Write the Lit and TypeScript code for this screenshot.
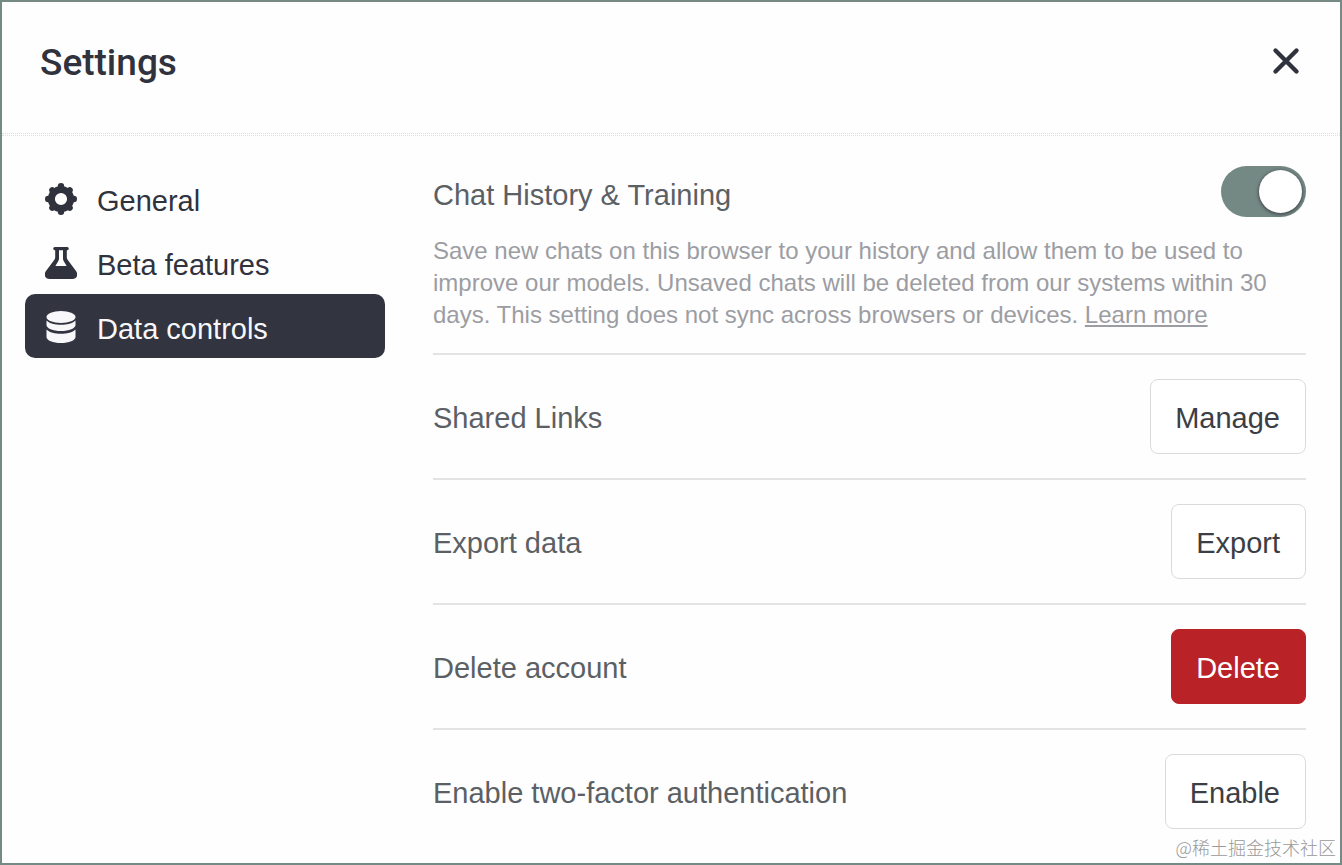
import { LitElement, html, css, svg } from "lit";
import { customElement, state } from "lit/decorators.js";

const icons = {
  general: svg`<g fill="none" stroke="currentColor" stroke-linecap="round"><circle cx="16" cy="16" r="9.600" stroke-width="7"/><path stroke-width="6.400" d="M16 3.200V6M16 28.800V26M3.200 16H6M28.800 16H26"/><path stroke-width="6" d="M7.200 7.200L9 9M24.800 7.200L23 9M7.200 24.800L9 23M24.800 24.800L23 23"/></g>`,
  beta: svg`<path fill-rule="evenodd" d="M9.800 0h12.400a1.600 1.600 0 0 1 0 3.200H21.800v7.400c0 1 .4 1.600 1 2.400l8.200 11c2.600 3.800.8 8-3.800 8H4.800C.2 32-1.600 27.800 1 24L9.200 13c.6-.8 1-1.400 1-2.400V3.200H9.800A1.600 1.600 0 0 1 9.800 0ZM14 3.200v8.400c0 1-.3 1.800-.8 2.600L10.400 19h11.200l-2.800-4.800c-.5-.8-.8-1.600-.8-2.600V3.200Z"/>`,
  data: svg`<ellipse cx="16" cy="6" rx="14.500" ry="6"/><path d="M1.500 9.500c3 3 8.500 4.200 14.500 4.200s11.500-1.200 14.500-4.200V14c0 3.400-6.500 6-14.500 6S1.500 17.400 1.500 14ZM1.500 18.500c3 3 8.500 4.200 14.500 4.200s11.500-1.200 14.500-4.200V26c0 3.400-6.500 6-14.500 6S1.500 29.400 1.500 26Z"/>`,
};

type Section = keyof typeof icons;

const sections: { id: Section; label: string }[] = [
  { id: "general", label: "General" },
  { id: "beta", label: "Beta features" },
  { id: "data", label: "Data controls" },
];

const actions = [
  { label: "Shared Links", button: "Manage", danger: false },
  { label: "Export data", button: "Export", danger: false },
  { label: "Delete account", button: "Delete", danger: true },
  { label: "Enable two-factor authentication", button: "Enable", danger: false },
];

@customElement("app-root")
export class AppRoot extends LitElement {
  @state() private section: Section = "data";

  static styles = css`
    :host {
      display: block;
      position: relative;
      box-sizing: border-box;
      min-height: 100vh;
      border: 2px solid #758985;
      background: #fefefe;
      color: #30323d;
      font-family: "Liberation Sans", Arial, sans-serif;
      font-size: 29px;
      line-height: 39px;
    }
    button {
      font: inherit;
      color: inherit;
      cursor: pointer;
    }
    .header {
      display: flex;
      align-items: center;
      justify-content: space-between;
      margin-bottom: 1px;
      padding: 33px 34px 46px 38px;
      border-bottom: 1px dotted #dfe0e2;
    }
    .title {
      margin: 0;
      padding-top: 4px;
      font-family: Roboto, sans-serif;
      font-size: 37px;
      font-weight: 500;
      line-height: 48px;
    }
    .close {
      display: flex;
      padding: 4px;
      border: 0;
      background: none;
    }
    .body {
      display: grid;
      grid-template-columns: 360px minmax(0, 1fr);
      gap: 48px;
      padding: 30px 34px 8px 23px;
      border-top: 1px dotted #dfe0e2;
    }
    .nav {
      display: flex;
      flex-direction: column;
    }
    .tab {
      display: flex;
      align-items: center;
      gap: 20px;
      height: 64px;
      padding: 6px 20px 0;
      border: 0;
      border-radius: 10px;
      background: none;
      text-align: left;
    }
    .tab svg {
      width: 32px;
      height: 32px;
      margin-bottom: 4px;
      fill: currentColor;
    }
    .tab.active {
      background: #32343f;
      color: #f8f8fb;
    }
    .history {
      padding-bottom: 22px;
    }
    .row {
      display: flex;
      align-items: center;
      justify-content: space-between;
      color: #5b6065;
    }
    .label {
      padding-top: 3px;
    }
    .history .row {
      height: 56px;
    }
    .switch {
      appearance: none;
      display: flex;
      align-items: center;
      width: 85px;
      height: 51px;
      margin: 0 0 6px;
      padding: 4px;
      box-sizing: border-box;
      border-radius: 26px;
      background: #b5babd;
      cursor: pointer;
    }
    .switch::before {
      content: "";
      width: 43px;
      height: 43px;
      border-radius: 50%;
      background: #fff;
      box-shadow: 0 1px 3px 1px #4b5557;
    }
    .switch:checked {
      justify-content: flex-end;
      background: #748884;
    }
    .note {
      margin: 13px 0 0;
      color: #9c9da2;
      font-size: 24px;
      line-height: 32px;
    }
    .note a {
      color: inherit;
      text-decoration-thickness: 2px;
      text-underline-offset: 2px;
    }
    .action {
      padding: 24px 0;
      border-top: 2px solid #e2e3e4;
    }
    .btn {
      padding: 19px 25px 15px 24px;
      border: 1px solid #d9dadb;
      border-radius: 8px;
      background: #fff;
      color: #3c3e46;
    }
    .btn.danger {
      border-color: #b92328;
      background: #b92328;
      color: #fff;
    }
    .mark {
      position: absolute;
      right: 4px;
      bottom: 4px;
      color: #999;
      font-family: "Noto Sans CJK SC", sans-serif;
      font-size: 18px;
      font-weight: 300;
      line-height: 24px;
    }
  `;

  render() {
    return html`
      <header class="header">
        <h1 class="title">Settings</h1>
        <button class="close" aria-label="Close">
          <svg width="32" height="32" viewBox="0 0 32 32" fill="none" stroke="currentColor" stroke-width="4.400" stroke-linecap="round">
            <path d="M5.500 5.500 26.500 26.500M26.500 5.500 5.500 26.500" />
          </svg>
        </button>
      </header>
      <div class="body">
        <nav class="nav">
          ${sections.map(
            (s) => html`<button
              class="tab ${s.id === this.section ? "active" : ""}"
              @click=${() => (this.section = s.id)}
            >
              <svg viewBox="0 0 32 32" aria-hidden="true">${icons[s.id]}</svg>
              <span>${s.label}</span>
            </button>`
          )}
        </nav>
        <main>
          <section class="history">
            <div class="row">
              <label class="label" for="history">Chat History &amp; Training</label>
              <input id="history" class="switch" type="checkbox" role="switch" checked />
            </div>
            <p class="note">
              <span
                >Save new chats on this browser to your history and allow them to be used to improve our models. Unsaved
                chats will be deleted from our systems within 30 days. This setting does not sync across browsers or
                devices.</span
              >
              <a href="#">Learn more</a>
            </p>
          </section>
          ${actions.map(
            (a, i) => html`<div class="row action">
              <span class="label" id="action-${i}">${a.label}</span>
              <button class="btn ${a.danger ? "danger" : ""}" aria-describedby="action-${i}">${a.button}</button>
            </div>`
          )}
        </main>
      </div>
      <span class="mark">@稀土掘金技术社区</span>
    `;
  }
}
